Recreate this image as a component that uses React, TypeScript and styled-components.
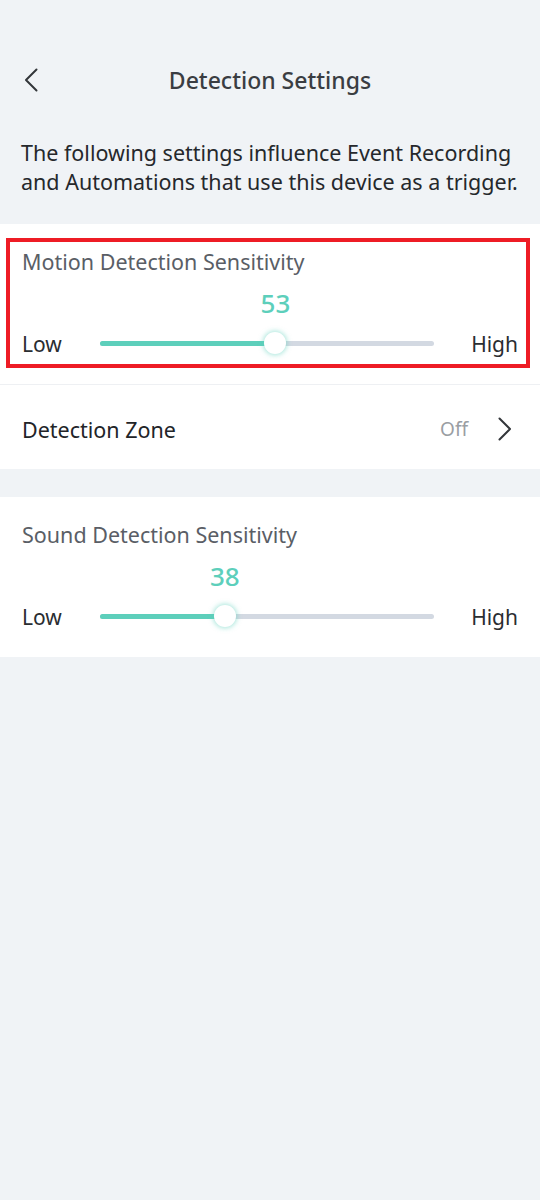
import React from "react";
import styled, { createGlobalStyle } from "styled-components";

const Global = createGlobalStyle`
  html, body { margin: 0; padding: 0; background: #f0f3f6; }
  body { font-family: "Noto Sans", "Liberation Sans", sans-serif; -webkit-font-smoothing: antialiased; }
  * { box-sizing: border-box; }
`;

const Page = styled.div`
  min-height: 1200px;
  background: #f0f3f6;
  display: flex;
  flex-direction: column;
`;

const Header = styled.header`
  margin-top: 56px;
  height: 48px;
  display: grid;
  grid-template-columns: 60px 1fr 60px;
  align-items: center;
`;

const BackButton = styled.button`
  border: 0;
  background: none;
  padding: 0 0 0 24px;
  height: 48px;
  display: flex;
  align-items: center;
  color: #33363a;
`;

const Title = styled.h1`
  margin: 0;
  text-align: center;
  font-size: 23px;
  line-height: 48px;
  font-weight: 500;
  color: #3a3d42;
`;

const Intro = styled.p`
  margin: 34px 0 0;
  padding: 0 16px 28px 21px;
  font-size: 21.5px;
  line-height: 29px;
  color: #25282c;
`;

const Card = styled.section`
  background: #fff;
  padding: 14px 10px 16px 6px;
`;

const Highlight = styled.div<{ $marked?: boolean }>`
  border: 4px solid ${(p) => (p.$marked ? "#ee1c25" : "transparent")};
  padding: 7px 8px 8px 12px;
  display: flex;
  flex-direction: column;
`;

const CardTitle = styled.div`
  font-size: 21.5px;
  line-height: 26px;
  color: #5a5e66;
`;

const SliderGrid = styled.div`
  display: grid;
  grid-template-columns: 78px 1fr 84px;
  align-items: center;
`;

const ValueRow = styled(SliderGrid)`
  margin-top: 14px;
  height: 28px;
`;

const ValueSlot = styled.div`
  grid-column: 2;
  position: relative;
  height: 28px;
`;

const ValueLabel = styled.span`
  position: absolute;
  top: 0;
  transform: translateX(-50%);
  font-size: 26px;
  line-height: 28px;
  font-weight: 500;
  color: #5dcfbb;
`;

const TrackRow = styled(SliderGrid)`
  margin-top: 11px;
  height: 28px;
`;

const EndLabel = styled.span<{ $right?: boolean }>`
  font-size: 21px;
  line-height: 28px;
  color: #2a2d31;
  text-align: ${(p) => (p.$right ? "right" : "left")};
  padding-top: 2px;
`;

const Track = styled.div`
  position: relative;
  height: 5px;
  border-radius: 3px;
  background: #d3d9e2;
`;

const Fill = styled.div`
  position: absolute;
  left: 0;
  top: 0;
  bottom: 0;
  border-radius: 3px;
  background: #5dcfbb;
`;

const Thumb = styled.div`
  position: absolute;
  top: 50%;
  width: 22px;
  height: 22px;
  border-radius: 50%;
  background: #fff;
  transform: translate(-50%, -50%);
  box-shadow: 0 0 5px 1px rgba(93, 207, 187, 0.55);
`;

const Divider = styled.div`
  height: 1px;
  background: #eef0f3;
`;

const LinkRow = styled.div`
  background: #fff;
  height: 84px;
  display: flex;
  align-items: center;
  padding: 4px 28px 0 22px;
`;

const LinkLabel = styled.span`
  flex: 1;
  font-size: 21.5px;
  color: #222428;
`;

const LinkValue = styled.span`
  font-size: 19px;
  color: #9a9ea3;
  margin-right: 30px;
`;

const Gap = styled.div`
  height: 28px;
`;

const Chevron = ({ dir }: { dir: "left" | "right" }) => (
  <svg width="14" height="24" viewBox="0 0 14 24" fill="none">
    <path
      d={dir === "left" ? "M12.5 1.5 L2 12 L12.5 22.5" : "M1.5 1.5 L12 12 L1.5 22.5"}
      stroke="#33363a"
      strokeWidth="2"
      strokeLinecap="round"
      strokeLinejoin="round"
    />
  </svg>
);

const MIN = 1;
const MAX = 100;

const Sensitivity = ({ title, value, marked }: { title: string; value: number; marked?: boolean }) => {
  const pct = ((value - MIN) / (MAX - MIN)) * 100;
  return (
    <Card>
      <Highlight $marked={marked}>
        <CardTitle>{title}</CardTitle>
        <ValueRow>
          <ValueSlot>
            <ValueLabel style={{ left: `${pct}%` }}>{value}</ValueLabel>
          </ValueSlot>
        </ValueRow>
        <TrackRow>
          <EndLabel>Low</EndLabel>
          <Track>
            <Fill style={{ width: `${pct}%` }} />
            <Thumb style={{ left: `${pct}%` }} />
          </Track>
          <EndLabel $right>High</EndLabel>
        </TrackRow>
      </Highlight>
    </Card>
  );
};

export default function App() {
  return (
    <>
      <Global />
      <Page>
        <Header>
          <BackButton aria-label="Back">
            <Chevron dir="left" />
          </BackButton>
          <Title>Detection Settings</Title>
          <span />
        </Header>
        <Intro>
          The following settings influence Event Recording and Automations that use this device as a trigger.
        </Intro>
        <Sensitivity title="Motion Detection Sensitivity" value={53} marked />
        <Divider />
        <LinkRow>
          <LinkLabel>Detection Zone</LinkLabel>
          <LinkValue>Off</LinkValue>
          <Chevron dir="right" />
        </LinkRow>
        <Gap />
        <Sensitivity title="Sound Detection Sensitivity" value={38} />
      </Page>
    </>
  );
}
